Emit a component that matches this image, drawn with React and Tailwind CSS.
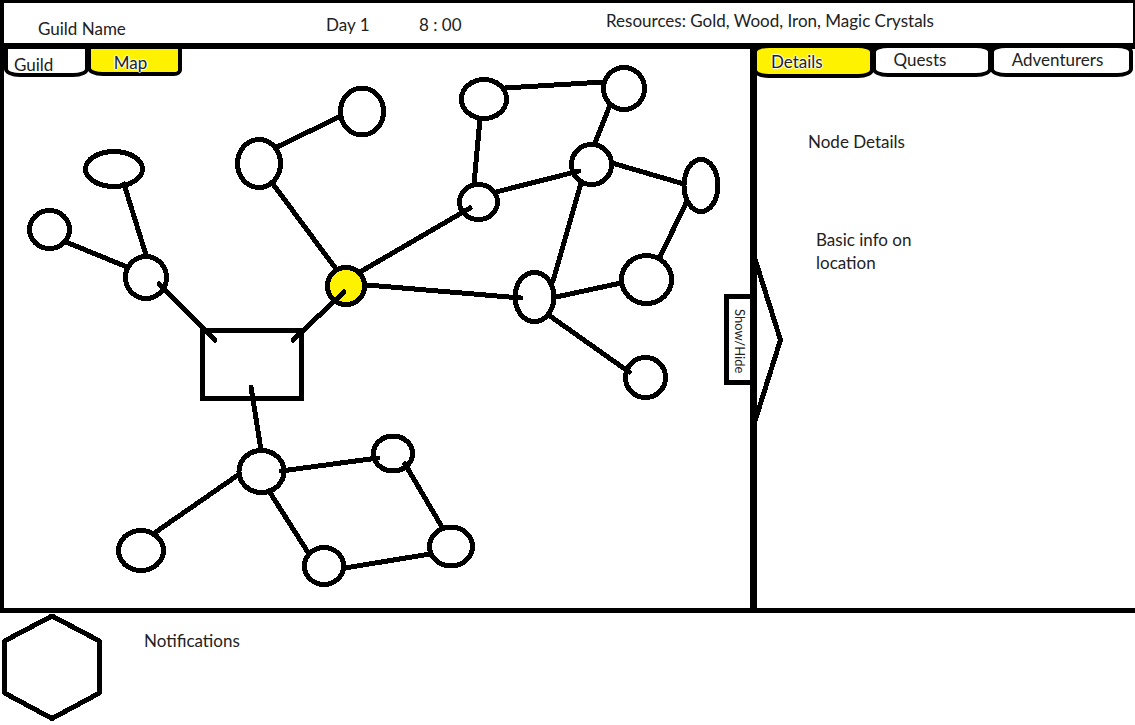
import React, { useState } from "react";

const nodes = [
  { name: "North ridge", cx: 362, cy: 111.5, rx: 21.5, ry: 23.5 },
  { name: "North pass", cx: 259, cy: 163.5, rx: 21.5, ry: 24 },
  { name: "West lake", cx: 114, cy: 169, rx: 28.5, ry: 17.5 },
  { name: "West end", cx: 49.5, cy: 229.5, rx: 20, ry: 19 },
  { name: "West fork", cx: 146, cy: 277.5, rx: 20.5, ry: 21 },
  { name: "Crossroads", cx: 346, cy: 286, rx: 18.5, ry: 18.5, active: true },
  { name: "Upper east", cx: 484, cy: 99, rx: 22.5, ry: 19.5 },
  { name: "Upper far east", cx: 624, cy: 88.5, rx: 20.5, ry: 21 },
  { name: "East hub", cx: 591.5, cy: 164.5, rx: 20, ry: 20 },
  { name: "East gate", cx: 478.5, cy: 202, rx: 19, ry: 17.5 },
  { name: "Far east", cx: 701, cy: 185.5, rx: 17, ry: 26 },
  { name: "East hollow", cx: 646.5, cy: 279.5, rx: 25, ry: 24 },
  { name: "East fork", cx: 534.5, cy: 297, rx: 19.5, ry: 24.5 },
  { name: "Lower east", cx: 645.5, cy: 377.5, rx: 20, ry: 20 },
  { name: "South fork", cx: 261.5, cy: 471.5, rx: 22.5, ry: 21 },
  { name: "South hill", cx: 393, cy: 453.5, rx: 19.5, ry: 17.5 },
  { name: "South east", cx: 451, cy: 546.5, rx: 21.5, ry: 19.5 },
  { name: "South end", cx: 324, cy: 566, rx: 19.5, ry: 18.5 },
  { name: "South west", cx: 141, cy: 550.5, rx: 22.5, ry: 20 },
];

const paths = [
  [341, 116, 277, 147],
  [273, 184, 336, 269],
  [124, 184, 146, 255],
  [66, 242, 127, 267],
  [159, 284, 215, 340],
  [344, 292, 293, 340],
  [360, 272, 470, 208],
  [367, 285, 521, 298],
  [251, 387, 261, 450],
  [505, 88, 604, 82],
  [480, 119, 474, 184],
  [610, 105, 595, 143],
  [496, 192, 579, 171],
  [612, 163, 684, 184],
  [581, 183, 553, 281],
  [556, 297, 621, 283],
  [687, 201, 660, 257],
  [550, 316, 629, 372],
  [281, 471, 378, 458],
  [405, 464, 442, 527],
  [269, 491, 309, 554],
  [345, 568, 430, 554],
  [238, 475, 153, 534],
];

function WorldMap() {
  return (
    <svg
      viewBox="4 49 746 559"
      className="col-start-1 row-start-1 block h-auto w-full"
      fill="none"
      stroke="#000"
      strokeWidth="5"
      strokeLinecap="round"
      shapeRendering="crispEdges"
      role="img"
      aria-label="Map"
    >
      <rect x="202.5" y="330.5" width="99" height="68" />
      {nodes.map((n) => (
        <ellipse
          key={n.name}
          cx={n.cx}
          cy={n.cy}
          rx={n.rx}
          ry={n.ry}
          fill={n.active ? "#fff200" : "#fff"}
        />
      ))}
      {paths.map(([x1, y1, x2, y2]) => (
        <line key={`${x1}-${y1}`} x1={x1} y1={y1} x2={x2} y2={y2} />
      ))}
    </svg>
  );
}

const halo = "[text-shadow:0_0_1px_#fff,1px_0_1px_#fff,-1px_0_1px_#fff,0_1px_1px_#fff,0_-1px_1px_#fff]";

export default function App() {
  const [open, setOpen] = useState(true);

  return (
    <div className="flex min-h-screen flex-col bg-white font-['Lato','Liberation_Sans',sans-serif] text-[17px] leading-[23px] text-[#222]">
      <header className="grid min-h-[49px] grid-cols-[288fr_93fr_187fr_527fr] items-start border-t-3 border-r-2 border-b-6 border-l-4 border-black pl-[34px]">
        <h1 className="pt-[14px]">Guild Name</h1>
        <span className="pt-[10px]">Day 1</span>
        <span className="pt-[10px]">8 : 00</span>
        <span className="pt-[6px]">Resources: Gold, Wood, Iron, Magic Crystals</span>
      </header>

      <main className="flex flex-1">
        <section className="relative grid min-w-0 flex-1 items-start border-l-4 border-black">
          <WorldMap />
          <nav className="z-10 col-start-1 row-start-1 flex items-start justify-self-start">
            <button className="h-7 w-[85px] border-4 border-t-0 border-black bg-white pt-1 pl-1.5 text-left [border-radius:0_0_16px_16px/0_0_8px_8px]">
              Guild
            </button>
            <button
              className={`-ml-0.5 h-[27px] w-[95px] border-4 border-t-0 border-black bg-[#fff200] pt-0.5 pr-2 [border-radius:0_0_8px_16px/0_0_6px_8px] ${halo}`}
              aria-current="page"
            >
              Map
            </button>
          </nav>
          <button
            onClick={() => setOpen(!open)}
            aria-expanded={open}
            className="absolute top-[245px] right-0 flex h-[91px] w-[26px] items-center justify-center border-[5px] border-r-0 border-black bg-white pt-1 text-[13px] leading-5 [writing-mode:vertical-rl]"
          >
            Show/Hide
          </button>
        </section>

        <aside className={`relative shrink-0 border-l-7 border-black ${open ? "w-[385px]" : "w-8"}`}>
          {open && (
            <>
              <nav className="-mt-[5px] -ml-1 grid grid-cols-[121fr_118fr_141fr] items-start pr-0.5">
                <button
                  className={`h-[34px] border-4 border-black bg-[#fff200] pl-3.5 text-left [border-radius:16px/8px] ${halo}`}
                  aria-current="page"
                >
                  Details
                </button>
                <button className="-ml-0.5 h-[33px] border-4 border-black bg-white pr-6 pb-1 [border-radius:16px/8px]">
                  Quests
                </button>
                <button className="-ml-0.5 h-[33px] border-4 border-black bg-white pr-2 pb-1 [border-radius:16px/8px]">
                  Adventurers
                </button>
              </nav>
              <div className="pt-[52px] pl-[51px]">
                <h2>Node Details</h2>
                <p className="mt-[75px] ml-2 w-28">Basic info on location</p>
              </div>
            </>
          )}
          <svg
            viewBox="0 0 28 174"
            className="absolute top-[204px] left-0 h-[174px] w-7"
            fill="none"
            stroke="#000"
            strokeWidth="5"
            shapeRendering="crispEdges"
            aria-hidden="true"
          >
            <path d="M-2 6 23.500 87-2 168" strokeLinejoin="round" />
          </svg>
        </aside>
      </main>

      <footer className="flex min-h-[117px] items-start border-t-5 border-black">
        <svg
          viewBox="0 0 104 108"
          className="h-[108px] w-[104px] shrink-0"
          fill="none"
          stroke="#000"
          strokeWidth="5"
          strokeLinejoin="round"
          shapeRendering="crispEdges"
          aria-hidden="true"
        >
          <path d="M52 3 99.500 28V80L52 105.500 4.500 80V28Z" />
        </svg>
        <p className="pt-4 pl-10">Notifications</p>
      </footer>
    </div>
  );
}
